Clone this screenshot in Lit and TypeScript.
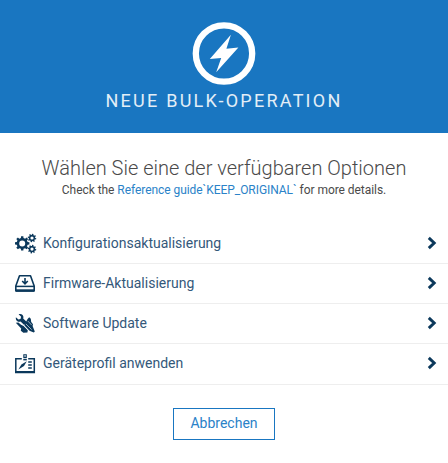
import { LitElement, html, css, svg } from "lit";
import { customElement } from "lit/decorators.js";

/** Outline of a cog with square teeth, plus its round hole. */
function cog(cx: number, cy: number, outer: number, inner: number, hole: number, teeth: number, turn = 0): string {
  const step = (Math.PI * 2) / teeth;
  const point = (r: number, a: number) =>
    `${(cx + r * Math.cos(a)).toFixed(2)} ${(cy + r * Math.sin(a)).toFixed(2)}`;
  const pts: string[] = [];
  for (let i = 0; i < teeth; i++) {
    const a = i * step + turn;
    pts.push(point(inner, a - step * 0.3), point(outer, a - step * 0.2));
    pts.push(point(outer, a + step * 0.2), point(inner, a + step * 0.3));
  }
  return `M${pts.join("L")}ZM${cx - hole} ${cy}a${hole} ${hole} 0 1 0 ${hole * 2} 0a${hole} ${hole} 0 1 0 ${-hole * 2} 0Z`;
}

const gears = svg`
  <path fill="currentColor" fill-rule="evenodd" d=${cog(7.2, 10.4, 7.3, 5.6, 3, 8)}></path>
  <path fill="currentColor" fill-rule="evenodd" d=${cog(17, 5, 4.3, 3.2, 1.6, 8, 0.2)}></path>
  <path fill="currentColor" fill-rule="evenodd" d=${cog(17, 16.1, 4.3, 3.2, 1.6, 8, 0.2)}></path>`;

const firmware = svg`
  <path d="M4.5 2.8H15.5L19.2 13V18H.8V13Z" fill="none" stroke="currentColor" stroke-width="1.6" stroke-linejoin="round"></path>
  <path d="M1 13.4H19" stroke="currentColor" stroke-width="1.5"></path>
  <path d="M1 17.5H19" stroke="currentColor" stroke-width="2.4"></path>
  <path d="M10 5V10.5M7.2 8L10 10.8L12.8 8" fill="none" stroke="currentColor" stroke-width="1.6"></path>`;

const tools = svg`
  <path d="M3.6 1.2C6.2 .2 8.8 2 8.4 4.8L8.2 5.6L12 9.2L9.2 12L5.6 8.4C3.2 9.4 .2 7.6 .9 4.2L3.4 6.6L5.5 5.9L6.1 3.7Z" fill="currentColor"></path>
  <path d="M12.6 6L14.2 4.2L15.8 5.8L16.2 9L18 11.2L17.6 13L19.8 18.6L18.8 19.6L14.4 17.8L9.4 12.6L10.8 9.2Z" fill="currentColor"></path>
  <path d="M.8 9.8L3.4 9.4L6 11.8L8.6 13L12.8 17.2L12.4 19.4L8.4 19.8L5.8 17.8L6.2 15.6Z" fill="currentColor"></path>
  <path d="M12.8 8L16.6 12M11 11L16.6 16.6M8.6 12.2L14.6 18.4" stroke="#fff" stroke-width=".6"></path>`;

const profile = svg`
  <path d="M6.8 5.8H.8V19.5H19.3V5.8H13.2" fill="none" stroke="currentColor" stroke-width="1.5"></path>
  <path d="M.1 19H20" stroke="currentColor" stroke-width="2"></path>
  <path fill="currentColor" fill-rule="evenodd" d="M8.3 1.2H11.8V5H8.3ZM9.4 2.2V3.8H10.7V2.2Z"></path>
  <path fill="currentColor" d="M8.3 5.8H11.8V7.4H8.3Z"></path>
  <path fill="currentColor" d="M11.8 8.2L9 13L3.4 16.4L6.4 11.6Z"></path>
  <path d="M13.2 9H16.8M13.2 12H16.8M13.2 15H16.8" stroke="currentColor" stroke-width="1.7"></path>`;

const options = [
  { label: "Konfigurationsaktualisierung", icon: gears },
  { label: "Firmware-Aktualisierung", icon: firmware },
  { label: "Software Update", icon: tools },
  { label: "Geräteprofil anwenden", icon: profile },
];

@customElement("app-root")
export class AppRoot extends LitElement {
  static styles = css`
    :host {
      display: block;
      height: 463px;
      overflow: hidden;
      background: #fff;
      font-family: Roboto, "Liberation Sans", sans-serif;
      color: #4a4a4a;
    }
    .header {
      box-sizing: border-box;
      height: 133px;
      padding-top: 21px;
      background: #1976c1;
      color: #fff;
      display: flex;
      flex-direction: column;
      align-items: center;
    }
    .bolt {
      display: block;
      width: 64px;
      height: 64px;
    }
    .title {
      margin: 5px 0 0;
      font-size: 18px;
      font-weight: 400;
      line-height: 21px;
      letter-spacing: 2.25px;
      white-space: nowrap;
      color: #e3eef7;
    }
    .intro {
      height: 91px;
      text-align: center;
      white-space: nowrap;
      display: flex;
      flex-direction: column;
      align-items: center;
    }
    .heading {
      margin: 23px 0 0;
      font-size: 20px;
      font-weight: 300;
      line-height: 24px;
    }
    .hint {
      margin: 2px 0 0;
      font-size: 12px;
      line-height: 16px;
      letter-spacing: -0.055px;
    }
    .link {
      color: #2a82c8;
      text-decoration: none;
    }
    .options {
      margin: 0;
      padding: 0;
      list-style: none;
    }
    .option {
      box-sizing: border-box;
      height: 40px;
      padding: 9px 11px 0 15px;
      border-bottom: 1px solid #eee;
      display: flex;
      align-items: flex-start;
      color: #0b385b;
      font-size: 14px;
      line-height: 20px;
    }
    .option:last-child {
      height: 41px;
    }
    .icon {
      width: 22px;
      height: 21px;
      margin-right: 6px;
      flex: none;
    }
    .label {
      flex: 1;
      color: #34587a;
    }
    .chevron {
      width: 10px;
      height: 14px;
      margin-top: 3px;
      flex: none;
    }
    .footer {
      display: flex;
      justify-content: center;
      padding-top: 23px;
    }
    .cancel {
      box-sizing: border-box;
      width: 102px;
      height: 32px;
      padding: 0 0 2px;
      border: 1px solid #1976c1;
      background: #fff;
      color: #2a82c8;
      font: 400 14px/28px Roboto, "Liberation Sans", sans-serif;
    }
  `;

  render() {
    return html`
      <header class="header">
        <svg class="bolt" viewBox="0 0 64 64">
          <circle cx="32" cy="32.5" r="28.2" fill="none" stroke="#fff" stroke-width="6.3"></circle>
          <path fill="#fff" d="M38.9 13.8L17.8 37.9L29.2 36.9L24.2 51.2L46.4 26.4L34.4 27.8Z"></path>
        </svg>
        <h1 class="title">NEUE BULK-OPERATION</h1>
      </header>
      <section class="intro">
        <h2 class="heading">Wählen Sie eine der verfügbaren Optionen</h2>
        <p class="hint">Check the <a class="link">Reference guide\`KEEP_ORIGINAL\`</a> for more details.</p>
      </section>
      <ul class="options">
        ${options.map(
          (o) => html`<li class="option">
            <svg class="icon" viewBox="0 0 22 21">${o.icon}</svg>
            <span class="label">${o.label}</span>
            <svg class="chevron" viewBox="0 0 10 14">
              <path d="M1.8 1.9L7.2 7L1.8 12.1" fill="none" stroke="currentColor" stroke-width="2.9"></path>
            </svg>
          </li>`
        )}
      </ul>
      <footer class="footer"><button class="cancel">Abbrechen</button></footer>
    `;
  }
}
